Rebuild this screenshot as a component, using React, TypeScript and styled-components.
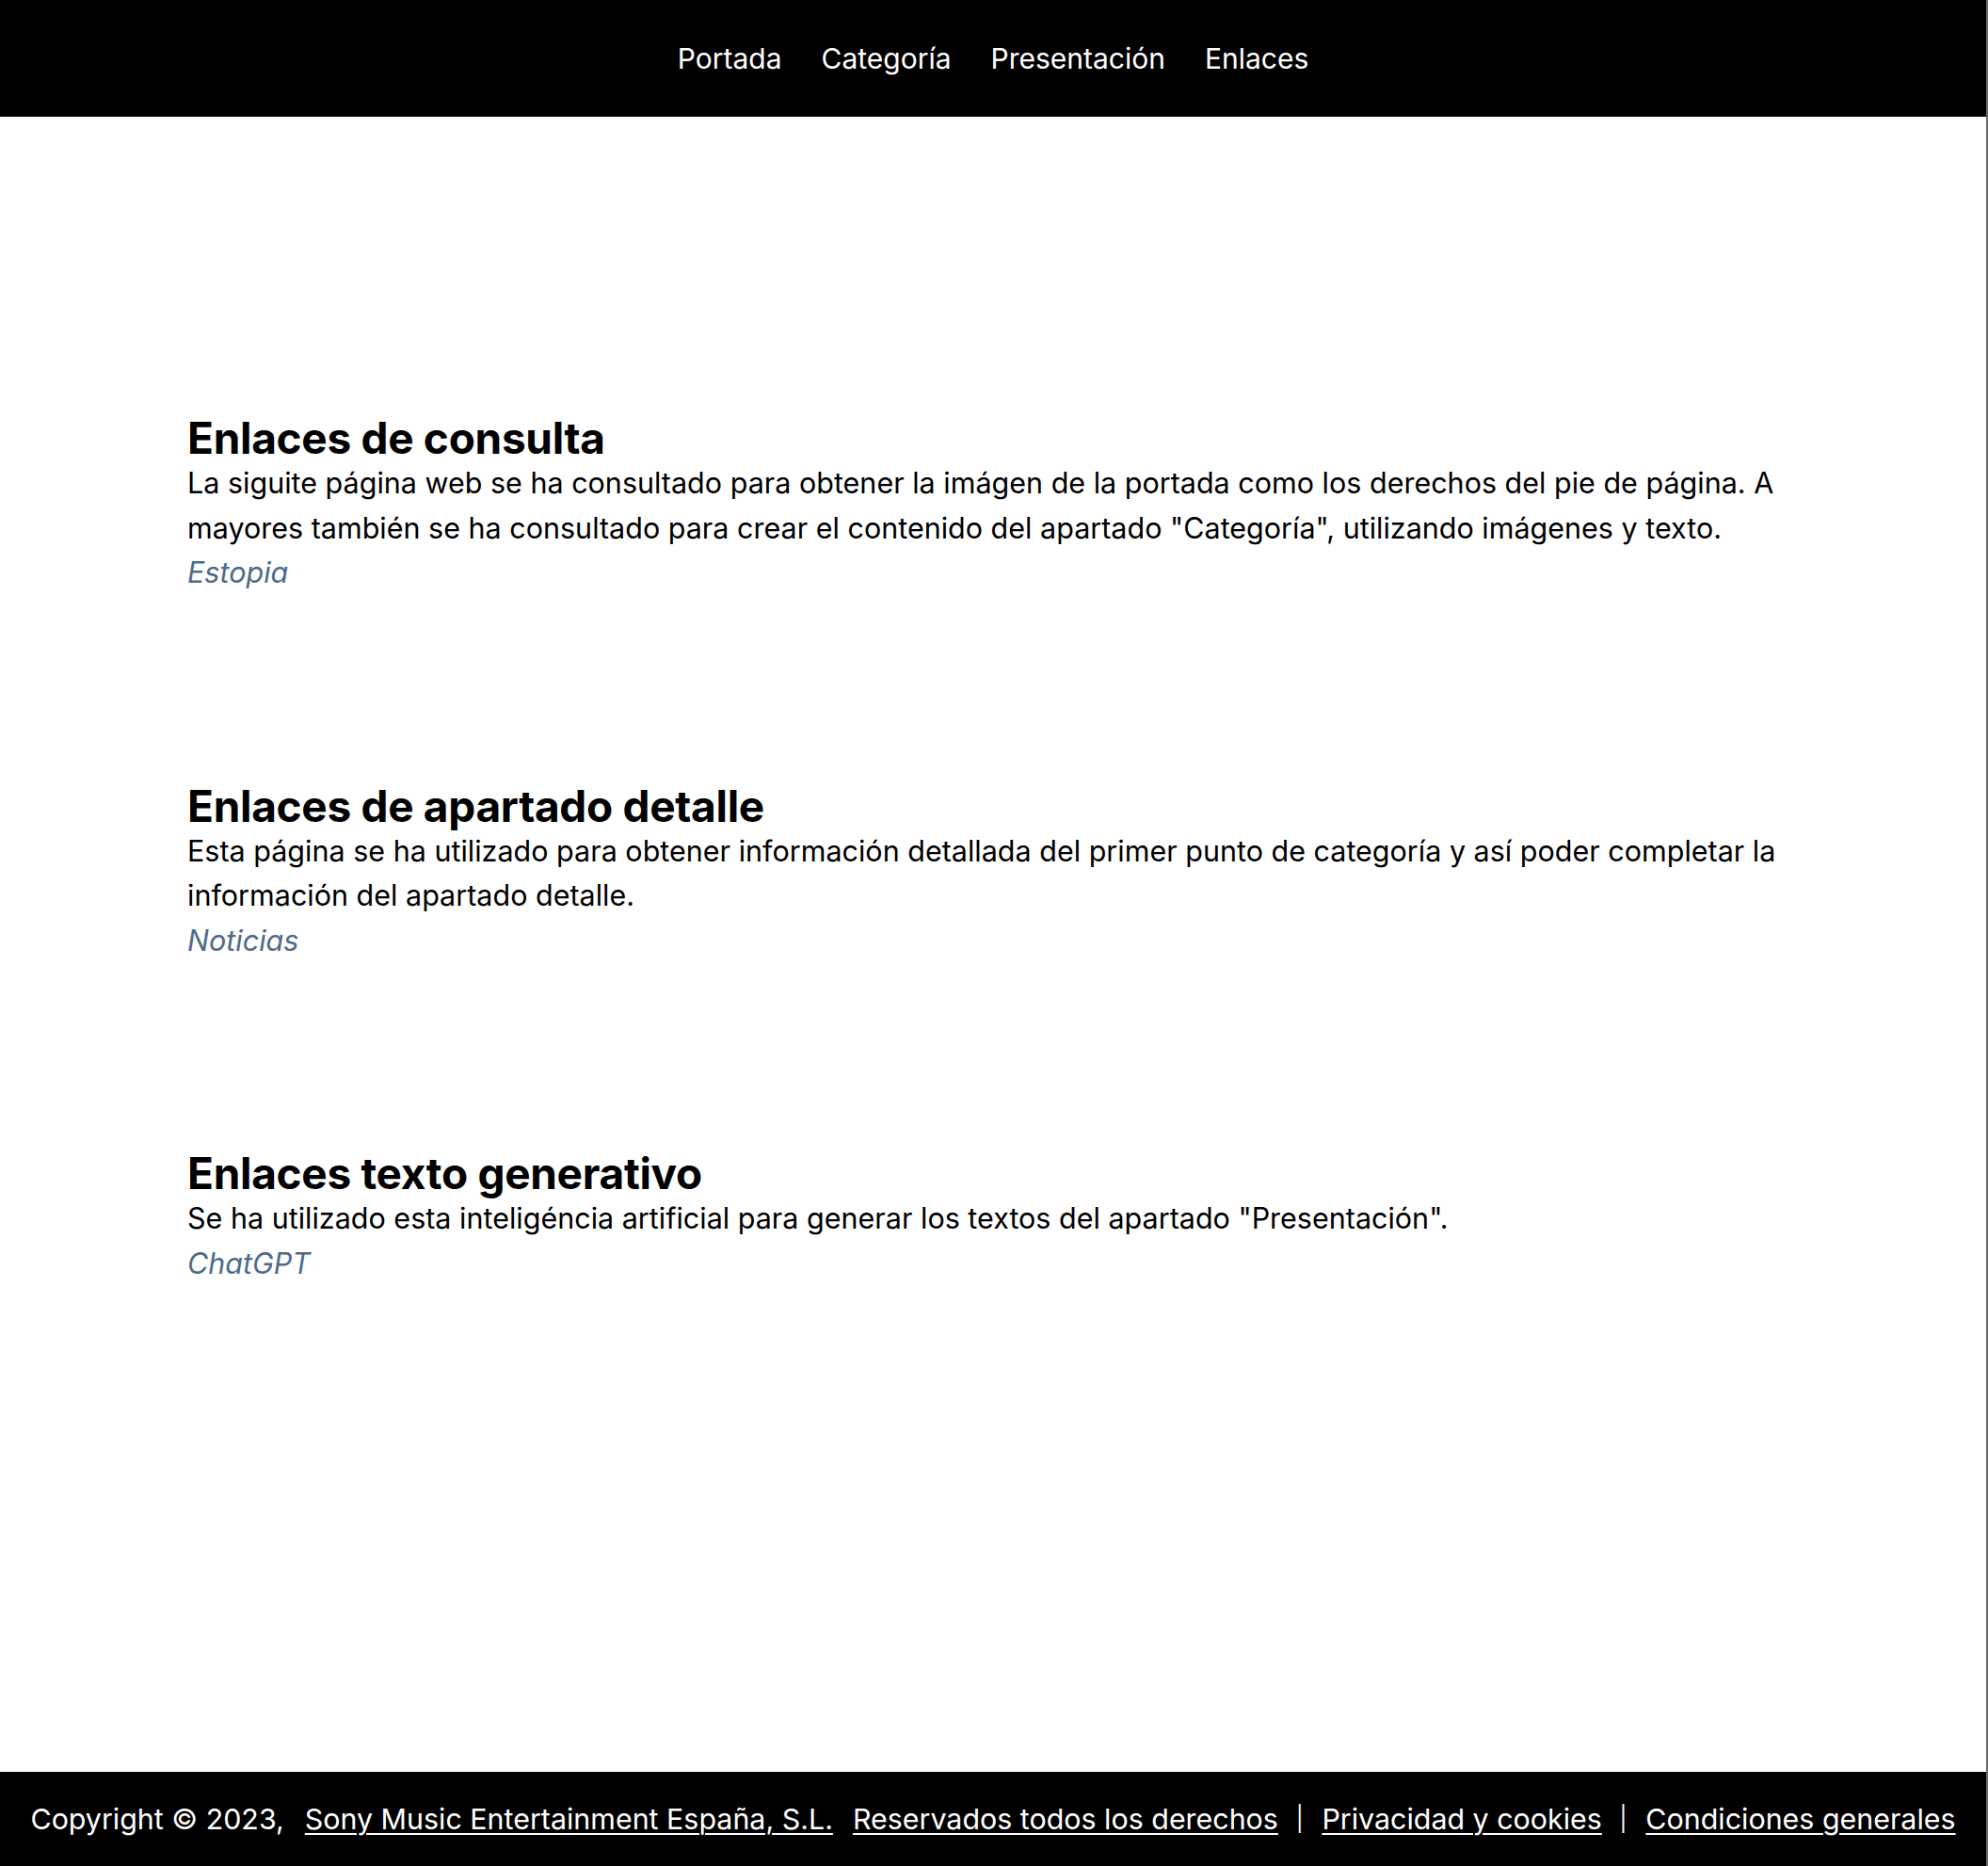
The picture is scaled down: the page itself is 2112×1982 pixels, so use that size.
import React from 'react'
import styled, { createGlobalStyle } from 'styled-components'

const GlobalStyle = createGlobalStyle`
  html,
  body {
    margin: 0;
    padding: 0;
    background: #ffffff;
  }

  body {
    font-family: Inter, 'Noto Sans', 'Liberation Sans', sans-serif;
    color: #000000;
  }
`

interface Section {
  title: string
  text: string
  link: string
}

const sections: Section[] = [
  {
    title: 'Enlaces de consulta',
    text:
      'La siguite página web se ha consultado para obtener la imágen de la portada como los derechos del pie de página. A mayores también se ha consultado para crear el contenido del apartado "Categoría", utilizando imágenes y texto.',
    link: 'Estopia',
  },
  {
    title: 'Enlaces de apartado detalle',
    text:
      'Esta página se ha utilizado para obtener información detallada del primer punto de categoría y así poder completar la información del apartado detalle.',
    link: 'Noticias',
  },
  {
    title: 'Enlaces texto generativo',
    text:
      'Se ha utilizado esta inteligéncia artificial para generar los textos del apartado "Presentación".',
    link: 'ChatGPT',
  },
]

const navItems = ['Portada', 'Categoría', 'Presentación', 'Enlaces']

const footerLinks = [
  'Reservados todos los derechos',
  'Privacidad y cookies',
  'Condiciones generales',
]

const App: React.FC = () => {
  return (
    <Page>
      <GlobalStyle />
      <Header>
        <Nav>
          {navItems.map((item) => (
            <NavLink key={item} href='#'>
              {item}
            </NavLink>
          ))}
        </Nav>
      </Header>

      <Main>
        {sections.map((section) => (
          <Block key={section.title}>
            <Title>{section.title}</Title>
            <Text>{section.text}</Text>
            <SourceLink href='#'>{section.link}</SourceLink>
          </Block>
        ))}
      </Main>

      <Footer>
        <FooterLine>
          Copyright © 2023,
          <FooterLink href='#' $gap={22}>
            Sony Music Entertainment España, S.L.
          </FooterLink>
          {footerLinks.map((link, idx) => (
            <React.Fragment key={link}>
              {idx > 0 && <Separator>|</Separator>}
              <FooterLink href='#' $gap={idx === 0 ? 21 : 0}>
                {link}
              </FooterLink>
            </React.Fragment>
          ))}
        </FooterLine>
      </Footer>
    </Page>
  )
}

const Page = styled.div`
  display: flex;
  flex-direction: column;
  min-height: 100vh;
  border-right: 2px solid #6b6b6b;
  box-sizing: border-box;
`

const Header = styled.header`
  display: flex;
  align-items: center;
  justify-content: center;
  height: 124px;
  background: #000000;
`

const Nav = styled.nav`
  display: flex;
  align-items: center;
  gap: 42px;
`

const NavLink = styled.a`
  color: #ffffff;
  font-size: 30px;
  line-height: 40px;
  text-decoration: none;
`

const Main = styled.main`
  flex: 1;
  display: flex;
  flex-direction: column;
  gap: 200px;
  padding: 317px 198px 120px;
`

const Block = styled.section`
  display: flex;
  flex-direction: column;
  align-items: flex-start;
`

const Title = styled.h1`
  margin: 0 0 0 1px;
  font-size: 46px;
  font-weight: 700;
  line-height: 48px;
  letter-spacing: -0.3px;
`

const Text = styled.p`
  margin: 0 0 0 1px;
  font-size: 30.5px;
  line-height: 47.5px;
`

const SourceLink = styled.a`
  margin-left: 1px;
  color: #4d6b8a;
  font-size: 30.5px;
  font-style: italic;
  line-height: 47.5px;
  text-decoration: none;
`

const Footer = styled.footer`
  display: flex;
  align-items: center;
  justify-content: center;
  height: 100px;
  background: #000000;
`

const FooterLine = styled.p`
  margin: 0;
  color: #ffffff;
  font-size: 30.4px;
  line-height: 40px;
  white-space: nowrap;
`

const FooterLink = styled.a<{ $gap: number }>`
  margin-left: ${(p) => p.$gap}px;
  color: #ffffff;
  text-decoration: underline;
  text-underline-offset: 4px;
  text-decoration-thickness: 2px;
`

const Separator = styled.span`
  display: inline-block;
  margin: 0 19px 0 18px;
  font-weight: 300;
  transform: scaleY(0.85);
`

export default App
